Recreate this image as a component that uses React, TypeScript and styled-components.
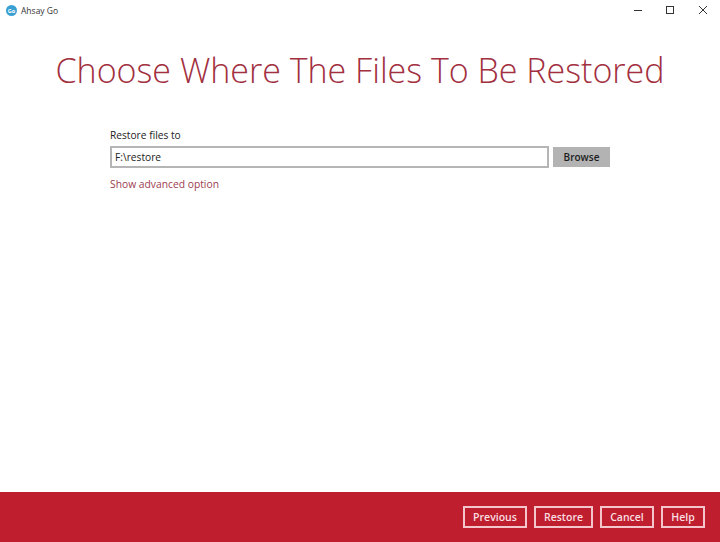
import { createGlobalStyle } from "styled-components";
import styled from "styled-components";

const Global = createGlobalStyle`
  html, body {
    margin: 0;
    padding: 0;
    background: #fff;
  }
  * {
    box-sizing: border-box;
  }
`

const Window = styled.div`
  width: 720px;
  height: 542px;
  display: flex;
  flex-direction: column;
  font-family: "Open Sans", sans-serif;
  background: #fff;
  overflow: hidden;
`

const TitleBar = styled.div`
  height: 20px;
  display: flex;
  align-items: center;
  padding-left: 6px;
  gap: 4px;
  font-size: 8.5px;
  color: #333;
`

const AppName = styled.span`
  flex: 1;
`

const WinControls = styled.div`
  display: flex;
  padding-right: 1px;
`

const WinButton = styled.div`
  width: 32.5px;
  height: 20px;
  display: flex;
  align-items: center;
  justify-content: center;
`

const Content = styled.main`
  flex: 1;
  display: flex;
  flex-direction: column;
`

const Heading = styled.h1`
  margin: 27px 0 0;
  font-size: 34px;
  line-height: 46px;
  font-weight: 300;
  text-align: center;
  color: #a2303f;
`

const Form = styled.div`
  margin: 35px 0 0 110px;
  width: 500px;
`

const Label = styled.div`
  font-size: 10.2px;
  line-height: 14px;
  color: #222;
`

const PathRow = styled.div`
  display: flex;
  align-items: center;
  gap: 4px;
  margin-top: 4px;
`

const PathInput = styled.div`
  flex: 1;
  height: 22px;
  border: 2px solid #b5b5b5;
  padding-left: 3px;
  font-size: 10.2px;
  line-height: 18px;
  color: #222;
`

const Browse = styled.button`
  width: 57px;
  height: 20px;
  border: 0;
  padding: 0;
  background: #b3b3b3;
  font: 600 10px "Open Sans", sans-serif;
  color: #1d1d1d;
`

const AdvancedLink = styled.a`
  display: block;
  margin-top: 9px;
  font-size: 10.3px;
  line-height: 14px;
  color: #9c3c50;
`

const Footer = styled.footer`
  height: 50px;
  background: #bf1e2e;
  display: flex;
  align-items: center;
  justify-content: flex-end;
  gap: 7px;
  padding-right: 15px;
`

const FooterButton = styled.button<{ $width: number }>`
  width: ${(p) => p.$width}px;
  height: 22px;
  padding: 0;
  border: 2px solid #f4c6cc;
  background: #bf1e2e;
  font: 600 10.5px "Open Sans", sans-serif;
  color: #f9dfe2;
`

const AppLogo = () => (
  <svg width="11" height="11" viewBox="0 0 11 11">
    <circle cx="5.5" cy="5.5" r="5.5" fill="#3a9fd2" />
    <text x="5.5" y="7.5" fontSize="5.5" fontWeight="700" textAnchor="middle" fill="#fff" fontFamily="Open Sans">
      Go
    </text>
  </svg>
)

export default function App() {
  return (
    <Window>
      <Global />
      <TitleBar>
        <AppLogo />
        <AppName>Ahsay Go</AppName>
        <WinControls>
          <WinButton>
            <svg width="10" height="10" viewBox="0 0 10 10">
              <path d="M1 5.5h8" stroke="#333" strokeWidth="1" />
            </svg>
          </WinButton>
          <WinButton>
            <svg width="10" height="10" viewBox="0 0 10 10">
              <rect x="1.5" y="1.5" width="7" height="7" fill="none" stroke="#333" strokeWidth="1" />
            </svg>
          </WinButton>
          <WinButton>
            <svg width="10" height="10" viewBox="0 0 10 10">
              <path d="M1 1l8 8M9 1l-8 8" stroke="#333" strokeWidth="1" />
            </svg>
          </WinButton>
        </WinControls>
      </TitleBar>
      <Content>
        <Heading>Choose Where The Files To Be Restored</Heading>
        <Form>
          <Label>Restore files to</Label>
          <PathRow>
            <PathInput>F:\restore</PathInput>
            <Browse>Browse</Browse>
          </PathRow>
          <AdvancedLink>Show advanced option</AdvancedLink>
        </Form>
      </Content>
      <Footer>
        <FooterButton $width={64}>Previous</FooterButton>
        <FooterButton $width={59}>Restore</FooterButton>
        <FooterButton $width={54}>Cancel</FooterButton>
        <FooterButton $width={44}>Help</FooterButton>
      </Footer>
    </Window>
  )
}
